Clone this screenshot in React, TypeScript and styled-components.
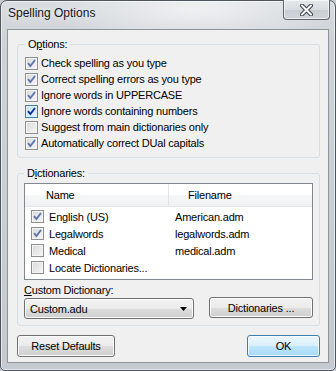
import styled, { createGlobalStyle } from "styled-components";

const GlobalStyle = createGlobalStyle`
  html, body {
    margin: 0;
    padding: 0;
    background: #c7ccd1;
  }
  * {
    box-sizing: border-box;
  }
`;

const Window = styled.div`
  width: 336px;
  height: 371px;
  display: flex;
  flex-direction: column;
  padding: 0 6px 7px 6px;
  border: 1px solid #4f565d;
  border-radius: 7px 7px 5px 5px;
  box-shadow: inset 0 0 0 1px rgba(255, 255, 255, 0.55);
  background:
    radial-gradient(ellipse 140px 40px at 58% 8px, rgba(255, 255, 255, 0.6), transparent),
    linear-gradient(180deg, #d9dde1 0, #cfd3d8 40px, #c5cad0 100%);
  font-family: "Liberation Sans", Arial, sans-serif;
  font-size: 11px;
  letter-spacing: -0.2px;
  color: #000;
`;

const TitleBar = styled.div`
  height: 28px;
  display: flex;
  align-items: flex-start;
  flex-shrink: 0;
`;

const Title = styled.div`
  margin: 5px 0 0 1px;
  font-size: 12px;
  line-height: 15px;
  letter-spacing: 0;
  color: #151515;
  text-shadow: 0 0 6px rgba(255, 255, 255, 0.9);
`;

const CloseButton = styled.div`
  margin: -1px -1px 0 auto;
  width: 47px;
  height: 20px;
  display: flex;
  align-items: center;
  justify-content: center;
  border: 1px solid #5f6770;
  border-top: none;
  border-radius: 0 0 4px 4px;
  background: linear-gradient(180deg, #e6e9ec 0, #d8dce0 50%, #c9ced3 51%, #cfd4d9 100%);
  box-shadow: inset 0 0 0 1px rgba(255, 255, 255, 0.6);
`;

const Client = styled.div`
  flex: 1;
  display: flex;
  flex-direction: column;
  border: 1px solid #8b949c;
  background: #f0f0f0;
  padding: 8px 8px 0 9px;
`;

const Group = styled.fieldset<{ $pad: string; $gap?: number }>`
  margin: ${(p) => p.$gap ?? 0}px 0 0 0;
  padding: ${(p) => p.$pad};
  border: 1px solid #d5dfe5;
  border-radius: 3px;
  min-width: 0;
`;

const Legend = styled.legend`
  padding: 0 3px;
  margin-left: 0;
  line-height: 13px;
`;

const OptionRow = styled.div`
  height: 16px;
  display: flex;
  align-items: center;
  gap: 3px;
  white-space: nowrap;
`;

const Box = styled.span<{ $hot?: boolean }>`
  width: 13px;
  height: 13px;
  flex-shrink: 0;
  display: inline-flex;
  align-items: center;
  justify-content: center;
  border: 1px solid ${(p) => (p.$hot ? "#3c7fb1" : "#8f8f8f")};
  background: ${(p) =>
    p.$hot
      ? "linear-gradient(135deg, #bfe0f4 0, #e9f6fd 100%)"
      : "linear-gradient(135deg, #d8d8d8 0, #f7f7f7 100%)"};
  box-shadow: inset 0 0 0 1px ${(p) => (p.$hot ? "#def0fa" : "#f4f4f4")};
`;

const ListBox = styled.div`
  height: 97px;
  border: 1px solid #828790;
  background: #fff;
`;

const Header = styled.div`
  height: 23px;
  display: grid;
  grid-template-columns: 144px 1fr;
  border-bottom: 1px solid #e2e3e5;
  background: linear-gradient(180deg, #ffffff 0, #ffffff 50%, #f6f7f8 51%, #f1f2f4 100%);
  margin-bottom: 1px;
`;

const HeaderCell = styled.div<{ $pad: number; $divider?: boolean }>`
  display: flex;
  align-items: center;
  padding-left: ${(p) => p.$pad}px;
  border-right: ${(p) => (p.$divider ? "1px solid #e3e4e6" : "none")};
`;

const ListRow = styled.div`
  height: 17px;
  display: grid;
  grid-template-columns: 143px 1fr;
  align-items: center;
`;

const NameCell = styled.div`
  display: flex;
  align-items: center;
  gap: 5px;
  padding-left: 6px;
  white-space: nowrap;
`;

const FileCell = styled.div`
  padding-left: 7px;
  white-space: nowrap;
`;

const FieldLabel = styled.div`
  margin-top: 4px;
  line-height: 13px;
`;

const ComboRow = styled.div`
  margin-top: 1px;
  display: flex;
  justify-content: space-between;
  align-items: flex-start;
`;

const Button = styled.div<{ $width: number; $default?: boolean }>`
  width: ${(p) => p.$width}px;
  height: 22px;
  display: flex;
  align-items: center;
  justify-content: center;
  border: 1px solid ${(p) => (p.$default ? "#3c7fb1" : "#707070")};
  border-radius: 3px;
  background: ${(p) =>
    p.$default
      ? "linear-gradient(180deg, #eaf6fd 0, #d9f0fc 50%, #bee6fd 51%, #a7d9f5 100%)"
      : "linear-gradient(180deg, #f2f2f2 0, #ebebeb 50%, #dddddd 51%, #cfcfcf 100%)"};
  box-shadow: inset 0 0 0 1px ${(p) => (p.$default ? "rgba(255,255,255,0.75)" : "#fcfcfc")};
`;

const DictButton = styled(Button)`
  height: 21px;
  margin-top: -1px;
`;

const Combo = styled.div`
  width: 170px;
  height: 21px;
  display: flex;
  align-items: center;
  justify-content: space-between;
  padding: 0 6px 0 5px;
  border: 1px solid #707070;
  border-radius: 3px;
  background: linear-gradient(180deg, #f2f2f2 0, #ebebeb 50%, #dddddd 51%, #cfcfcf 100%);
  box-shadow: inset 0 0 0 1px #fcfcfc;
`;

const Footer = styled.div`
  margin-top: 9px;
  display: flex;
  justify-content: space-between;
`;

const Check = ({ checked, hot }: { checked: boolean; hot?: boolean }) => (
  <Box $hot={hot}>
    {checked && (
      <svg width="9" height="9" viewBox="0 0 9 9">
        <path
          d="M1 4.2 L3.4 7 L8 1"
          fill="none"
          stroke={hot ? "#102f8f" : "#5d74b0"}
          strokeWidth="1.9"
        />
      </svg>
    )}
  </Box>
);

const options = [
  { label: "Check spelling as you type", checked: true },
  { label: "Correct spelling errors as you type", checked: true },
  { label: "Ignore words in UPPERCASE", checked: true },
  { label: "Ignore words containing numbers", checked: true, hot: true },
  { label: "Suggest from main dictionaries only", checked: false },
  { label: "Automatically correct DUal capitals", checked: true },
];

const dictionaries = [
  { name: "English (US)", file: "American.adm", checked: true },
  { name: "Legalwords", file: "legalwords.adm", checked: true },
  { name: "Medical", file: "medical.adm", checked: false },
  { name: "Locate Dictionaries...", file: "", checked: false },
];

export default function App() {
  return (
    <>
      <GlobalStyle />
      <Window>
        <TitleBar>
          <Title>Spelling Options</Title>
          <CloseButton>
            <svg width="13" height="12" viewBox="0 0 13 12">
              <path
                d="M2 1.5 L11 10.5 M11 1.5 L2 10.5"
                stroke="#3b4450"
                strokeWidth="4"
                strokeLinecap="round"
              />
              <path
                d="M2 1.5 L11 10.5 M11 1.5 L2 10.5"
                stroke="#ffffff"
                strokeWidth="2"
                strokeLinecap="round"
              />
            </svg>
          </CloseButton>
        </TitleBar>
        <Client>
          <Group $pad="4px 7px 6px 7px">
            <Legend>
              O<u>p</u>tions:
            </Legend>
            {options.map((o) => (
              <OptionRow key={o.label}>
                <Check checked={o.checked} hot={o.hot} />
                {o.label}
              </OptionRow>
            ))}
          </Group>
          <Group $pad="3px 6px 6px 6px" $gap={9}>
            <Legend>
              D<u>i</u>ctionaries:
            </Legend>
            <ListBox>
              <Header>
                <HeaderCell $pad={21} $divider>
                  Name
                </HeaderCell>
                <HeaderCell $pad={19}>Filename</HeaderCell>
              </Header>
              {dictionaries.map((d) => (
                <ListRow key={d.name}>
                  <NameCell>
                    <Check checked={d.checked} />
                    {d.name}
                  </NameCell>
                  <FileCell>{d.file}</FileCell>
                </ListRow>
              ))}
            </ListBox>
            <FieldLabel>
              <u>C</u>ustom Dictionary:
            </FieldLabel>
            <ComboRow>
              <Combo>
                Custom.adu
                <svg width="7" height="4" viewBox="0 0 7 4">
                  <path d="M0 0 H7 L3.5 4 Z" fill="#000" />
                </svg>
              </Combo>
              <DictButton $width={104}>Dictionaries ...</DictButton>
            </ComboRow>
          </Group>
          <Footer>
            <Button $width={98}>Reset Defaults</Button>
            <Button $width={73} $default>
              OK
            </Button>
          </Footer>
        </Client>
      </Window>
    </>
  );
}
